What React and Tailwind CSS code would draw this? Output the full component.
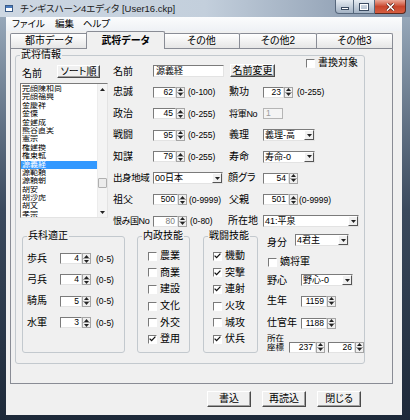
import React from "react";

const SUNK =
  "bg-white border border-t-[#7b7b7b] border-l-[#7b7b7b] border-r-[#e3e3e3] border-b-[#e3e3e3]";
const BTN =
  "bg-[#f0f0f0] border border-t-white border-l-white border-b-[#4a4a4a] border-r-[#4a4a4a] shadow-[inset_-1px_-1px_0_#a0a0a0] flex items-center justify-center text-[10px] leading-none shrink-0";

const Up = () => (
  <svg width="5" height="3" viewBox="0 0 5 3">
    <path d="M0 3L2.5 0L5 3Z" fill="#222" />
  </svg>
);
const Down = () => (
  <svg width="5" height="3" viewBox="0 0 5 3">
    <path d="M0 0L5 0L2.5 3Z" fill="#222" />
  </svg>
);

function Arrows() {
  return (
    <div className="w-[9px] h-[11px] flex flex-col bg-[#f0f0f0] border border-[#a5a5a5] shrink-0">
      <div className="flex-1 flex items-center justify-center border-b border-[#a5a5a5]">
        <Up />
      </div>
      <div className="flex-1 flex items-center justify-center">
        <Down />
      </div>
    </div>
  );
}

function Spin({ v, w, gray }) {
  return (
    <div className="flex shrink-0">
      <div
        className={`${w} h-[11px] ${SUNK} text-[8.5px] leading-[9px] text-right pr-[2px] ${
          gray ? "text-[#7a7a7a]" : "text-black"
        }`}
      >
        {v}
      </div>
      <Arrows />
    </div>
  );
}

function Sel({ v, w }) {
  return (
    <div className={`${w} h-[12px] ${SUNK} flex items-stretch shrink-0`}>
      <span className="flex-1 text-[9px] leading-[10px] pl-[1px] whitespace-nowrap overflow-hidden">
        {v}
      </span>
      <div className="w-[10px] bg-[#f0f0f0] border border-t-white border-l-white border-b-[#555] border-r-[#555] flex items-center justify-center">
        <Down />
      </div>
    </div>
  );
}

function Box({ on }) {
  return (
    <div className="w-[9px] h-[9px] shrink-0 bg-white border border-t-[#7a7a7a] border-l-[#7a7a7a] border-b-white border-r-white flex items-center justify-center">
      {on && (
        <svg width="7" height="6" viewBox="0 0 7 6">
          <path d="M0.6 2.6L2.6 4.6L6.4 0.6" stroke="#111" strokeWidth="1.3" fill="none" />
        </svg>
      )}
    </div>
  );
}

function Chk({ on, label }) {
  return (
    <div className="flex items-center h-[16.6px]">
      <Box on={on} />
      <span className="ml-[3px] text-[10px] leading-[12px] whitespace-nowrap">{label}</span>
    </div>
  );
}

function Group({ title, className, children }) {
  return (
    <div className={`relative border border-[#c3c9ce] rounded-[3px] shrink-0 ${className}`}>
      <span className="absolute left-[4px] -top-[7px] px-[1px] bg-[#f0f0f0] text-[10px] leading-[12px] whitespace-nowrap">
        {title}
      </span>
      {children}
    </div>
  );
}

const L = ({ children, w = "w-[40px]", className = "text-[10px]" }) => (
  <span className={`${w} shrink-0 leading-[12px] whitespace-nowrap ${className}`}>{children}</span>
);
const R = ({ children, className = "ml-[3px]" }) => (
  <span className={`text-[8.5px] leading-[10px] whitespace-nowrap ${className}`}>{children}</span>
);

const names = [
  "完顔陳和尚",
  "完顔福興",
  "金慶祥",
  "金傑",
  "金建成",
  "熊谷直実",
  "憲宗",
  "権建換",
  "権東軾",
  "源義経",
  "源範頼",
  "源頼朝",
  "胡安",
  "胡沙虎",
  "胡文",
  "孝宗",
];

function Row({ left, right }) {
  return (
    <div className="h-[21.5px] flex items-center">
      <div className="w-[115px] shrink-0 flex items-center">{left}</div>
      <div className="flex items-center">{right}</div>
    </div>
  );
}

export default function App() {
  return (
    <div className="w-[410px] h-[420px] overflow-hidden flex flex-col bg-gradient-to-b from-[#9fb0c2] via-[#3b4a5d] to-[#1d2939] text-black font-['Liberation_Sans','Noto_Sans_CJK_JP',sans-serif] [font-feature-settings:'palt']">
      {/* title bar */}
      <div className="h-[17px] shrink-0 flex items-center bg-gradient-to-r from-[#cdd7e2] via-[#c3cfdc] to-[#7f90a6]">
        <div className="ml-[5px] w-[8px] h-[7px] border border-[#3b5b86] bg-white flex flex-col">
          <div className="h-[2px] bg-[#4a7cc0]" />
        </div>
        <span className="ml-[7px] text-[9.5px] leading-[12px] text-[#1a1a1a] whitespace-nowrap">
          チンギスハーン4エディタ [User16.ckp]
        </span>
        <div className="ml-auto mr-[4px] self-start flex">
          <div className="w-[19px] h-[14px] rounded-bl-[4px] border border-t-0 border-[#56677c] bg-gradient-to-b from-[#e6ecf2] to-[#a3b2c4] flex items-center justify-center pt-[3px]">
            <div className="w-[8px] h-[3px] bg-white border border-[#3a4a60]" />
          </div>
          <div className="w-[21px] h-[14px] border border-t-0 border-l-0 border-[#56677c] bg-gradient-to-b from-[#e6ecf2] to-[#a3b2c4] flex items-center justify-center">
            <div className="w-[8px] h-[6px] border-[1.5px] border-white shadow-[0_0_0_1px_#3a4a60]" />
          </div>
          <div className="w-[31px] h-[14px] rounded-br-[4px] border border-t-0 border-l-0 border-[#5a2a20] bg-gradient-to-b from-[#eaa898] via-[#c8452c] to-[#d65d40] flex items-center justify-center">
            <svg width="9" height="8" viewBox="0 0 9 8">
              <path d="M1 0.5L8 7.5M8 0.5L1 7.5" stroke="#5a1a10" strokeWidth="3" />
              <path d="M1 0.5L8 7.5M8 0.5L1 7.5" stroke="#fff" strokeWidth="1.6" />
            </svg>
          </div>
        </div>
      </div>

      <div className="flex-1 flex min-h-0">
        <div className="w-[6px] shrink-0" />
        {/* client */}
        <div className="w-[396px] shrink-0 bg-[#f0f0f0] flex flex-col">
          {/* menu */}
          <div className="h-[14px] shrink-0 flex items-center bg-gradient-to-b from-[#fbfcfd] to-[#eef1f5] text-[9.5px] leading-[12px]">
            <span className="ml-[6px]">ファイル</span>
            <span className="ml-[10px]">編集</span>
            <span className="ml-[9px]">ヘルプ</span>
          </div>
          {/* tabs */}
          <div className="h-[17px] shrink-0 flex items-end pl-[4px]">
            <div className="w-[78px] h-[15px] border border-b-0 border-[#898c95] rounded-t-[2px] bg-gradient-to-b from-white to-[#e6e6e6] flex items-center justify-center text-[10px] leading-[12px]">
              都市データ
            </div>
            <div className="relative z-10 -mx-[2px] -mb-px w-[79px] h-[18px] border border-b-0 border-[#898c95] rounded-t-[2px] bg-[#f0f0f0] flex items-center justify-center text-[10px] leading-[12px] font-bold">
              武将データ
            </div>
            <div className="w-[77px] h-[15px] border border-b-0 border-[#898c95] rounded-t-[2px] bg-gradient-to-b from-white to-[#e6e6e6] flex items-center justify-center text-[10px] leading-[12px]">
              その他
            </div>
            <div className="-ml-px w-[78px] h-[15px] border border-b-0 border-[#898c95] rounded-t-[2px] bg-gradient-to-b from-white to-[#e6e6e6] flex items-center justify-center text-[10px] leading-[12px]">
              その他2
            </div>
            <div className="-ml-px w-[77px] h-[15px] border border-b-0 border-[#898c95] rounded-t-[2px] bg-gradient-to-b from-white to-[#e6e6e6] flex items-center justify-center text-[10px] leading-[12px]">
              その他3
            </div>
          </div>
          {/* panel */}
          <div className="ml-[4px] w-[383px] h-[336px] shrink-0 border border-[#898c95] bg-[#f0f0f0] pl-[4px] pt-[6px]">
            <Group title="武将情報" className="w-[350px] h-[309px]">
              <div className="pl-[4px] pt-[4px] flex h-[176px]">
                {/* list column */}
                <div className="w-[88px] shrink-0 flex flex-col">
                  <div className="h-[23px] flex items-center">
                    <span className="w-[37px] pl-[2px] mt-[5px] text-[10px] leading-[12px]">名前</span>
                    <div className={`${BTN} w-[43px] h-[13px]`}>ソート順</div>
                  </div>
                  <div className={`w-[88px] h-[135px] ${SUNK} flex overflow-hidden`}>
                    <div className="flex-1 pt-[1px] overflow-hidden">
                      {names.map((n, i) => (
                        <div
                          key={n}
                          className={`h-[8.4px] leading-[8.4px] text-[8px] pl-[1px] whitespace-nowrap overflow-hidden ${
                            i === 9 ? "bg-[#3399ff] text-white" : ""
                          }`}
                        >
                          {n}
                        </div>
                      ))}
                    </div>
                    <div className="w-[10px] shrink-0 flex flex-col bg-[#f4f4f4] border-l border-[#ececec]">
                      <div className="h-[10px] flex items-center justify-center">
                        <Up />
                      </div>
                      <div className="flex-1">
                        <div className="mt-[84px] h-[10px] bg-[#ececec] border border-[#b0b0b0] rounded-[1px]" />
                      </div>
                      <div className="h-[10px] flex items-center justify-center">
                        <Down />
                      </div>
                    </div>
                  </div>
                </div>
                {/* fields */}
                <div className="ml-[5px] flex flex-col">
                  <div className="h-[21.5px] flex items-center">
                    <L className="text-[10px] mt-[3px]">名前</L>
                    <div className={`w-[71px] h-[12px] ${SUNK} text-[9px] leading-[10px] pl-[2px] whitespace-nowrap`}>
                      源義経
                    </div>
                    <div className={`${BTN} ml-[6px] w-[45px] h-[13px]`}>名前変更</div>
                    <div className="ml-[31px] self-start -mt-[3px] flex items-center">
                      <Box />
                      <span className="ml-[3px] text-[10px] leading-[12px]">書換対象</span>
                    </div>
                  </div>
                  <Row
                    left={
                      <>
                        <L>忠誠</L>
                        <Spin v="62" w="w-[23px]" />
                        <R>(0-100)</R>
                      </>
                    }
                    right={
                      <>
                        <L w="w-[35px]" className="text-[10px] pl-[1px]">勲功</L>
                        <Spin v="23" w="w-[21px]" />
                        <R className="ml-[4px]">(0-255)</R>
                      </>
                    }
                  />
                  <Row
                    left={
                      <>
                        <L>政治</L>
                        <Spin v="45" w="w-[23px]" />
                        <R>(0-255)</R>
                      </>
                    }
                    right={
                      <>
                        <L w="w-[35px]" className="text-[9px] pl-[1px] tracking-[-0.3px]">将軍No</L>
                        <div className="w-[20px] h-[11px] bg-[#f4f4f4] border border-[#b5b5b5] text-[8.5px] leading-[9px] pl-[2px] text-[#9a9a9a]">
                          1
                        </div>
                      </>
                    }
                  />
                  <Row
                    left={
                      <>
                        <L>戦闘</L>
                        <Spin v="95" w="w-[23px]" />
                        <R>(0-255)</R>
                      </>
                    }
                    right={
                      <>
                        <L w="w-[35px]" className="text-[10px] pl-[1px]">義理</L>
                        <Sel v="義理-高" w="w-[52px]" />
                      </>
                    }
                  />
                  <Row
                    left={
                      <>
                        <L>知謀</L>
                        <Spin v="79" w="w-[23px]" />
                        <R>(0-255)</R>
                      </>
                    }
                    right={
                      <>
                        <L w="w-[35px]" className="text-[10px] pl-[1px]">寿命</L>
                        <Sel v="寿命-0" w="w-[52px]" />
                      </>
                    }
                  />
                  <Row
                    left={
                      <>
                        <L className="text-[9.5px] tracking-[-0.4px]">出身地域</L>
                        <Sel v="00日本" w="w-[70px]" />
                      </>
                    }
                    right={
                      <>
                        <L w="w-[35px]" className="text-[10px]">顔グラ</L>
                        <Spin v="54" w="w-[26px]" />
                      </>
                    }
                  />
                  <Row
                    left={
                      <>
                        <L>祖父</L>
                        <Spin v="500" w="w-[25px]" />
                        <R className="ml-[2px]">(0-9999)</R>
                      </>
                    }
                    right={
                      <>
                        <L w="w-[35px]" className="text-[10px] pl-[1px]">父親</L>
                        <Spin v="501" w="w-[26px]" />
                        <R className="ml-[1px]">(0-9999)</R>
                      </>
                    }
                  />
                  <Row
                    left={
                      <>
                        <L className="text-[9px] tracking-[-0.4px]">恨み国No</L>
                        <Spin v="80" w="w-[25px]" gray />
                        <R className="ml-[3px]">(0-80)</R>
                      </>
                    }
                    right={
                      <>
                        <L w="w-[35px]" className="text-[10px]">所在地</L>
                        <Sel v="41:平泉" w="w-[96px]" />
                      </>
                    }
                  />
                </div>
              </div>

              {/* bottom part */}
              <div className="flex items-start">
                <Group title="兵科適正" className="ml-[6px] mt-[4px] w-[103px] h-[117px] pl-[4px] pt-[11px]">
                  {[
                    ["歩兵", "4"],
                    ["弓兵", "4"],
                    ["騎馬", "5"],
                    ["水軍", "3"],
                  ].map(([l, v]) => (
                    <div key={l} className="h-[21.3px] flex items-center">
                      <L w="w-[33px]">{l}</L>
                      <Spin v={v} w="w-[22px]" />
                      <R className="ml-[5px]">(0-5)</R>
                    </div>
                  ))}
                </Group>
                <Group title="内政技能" className="ml-[12px] mt-[4px] w-[53px] h-[117px] pl-[10px] pt-[11px]">
                  <Chk label="農業" />
                  <Chk label="商業" />
                  <Chk label="建設" />
                  <Chk label="文化" />
                  <Chk label="外交" />
                  <Chk label="登用" on />
                </Group>
                <Group title="戦闘技能" className="ml-[13px] mt-[4px] w-[55px] h-[117px] pl-[9px] pt-[11px]">
                  <Chk label="機動" on />
                  <Chk label="突撃" on />
                  <Chk label="連射" on />
                  <Chk label="火攻" />
                  <Chk label="城攻" />
                  <Chk label="伏兵" on />
                </Group>
                <div className="ml-[9px] flex flex-col -mt-[4px]">
                  <div className="h-[24px] flex items-center">
                    <L w="w-[28px]" className="text-[10px] mt-[6px]">身分</L>
                    <Sel v="4君主" w="w-[54px]" />
                  </div>
                  <div className="h-[20px] flex items-center pl-[1px]">
                    <Box />
                    <span className="ml-[3px] text-[10px] leading-[12px]">嫡将軍</span>
                  </div>
                  <div className="h-[16px] flex items-center">
                    <L w="w-[34px]" className="text-[10px] mt-[2px]">野心</L>
                    <Sel v="野心-0" w="w-[52px]" />
                  </div>
                  <div className="h-[26px] flex items-center">
                    <L w="w-[34px]">生年</L>
                    <Spin v="1159" w="w-[26px]" />
                  </div>
                  <div className="h-[18px] flex items-center">
                    <L w="w-[34px]">仕官年</L>
                    <Spin v="1188" w="w-[26px]" />
                  </div>
                  <div className="h-[22px] flex items-center">
                    <span className="w-[22px] shrink-0 text-[8.5px] leading-[9.5px] flex flex-col">
                      <span>所在</span>
                      <span>座標</span>
                    </span>
                    <div className="mt-[8px] flex">
                      <Spin v="237" w="w-[27px]" />
                      <div className="ml-[3px]">
                        <Spin v="26" w="w-[27px]" />
                      </div>
                    </div>
                  </div>
                </div>
              </div>
            </Group>
          </div>
          {/* buttons */}
          <div className="mt-[7px] flex pl-[201px] gap-[11px]">
            <div className={`${BTN} w-[44px] h-[16px]`}>書込</div>
            <div className={`${BTN} w-[44px] h-[16px]`}>再読込</div>
            <div className={`${BTN} w-[44px] h-[16px]`}>閉じる</div>
          </div>
        </div>
        <div className="flex-1" />
      </div>
      <div className="h-[5px] shrink-0" />
    </div>
  );
}
